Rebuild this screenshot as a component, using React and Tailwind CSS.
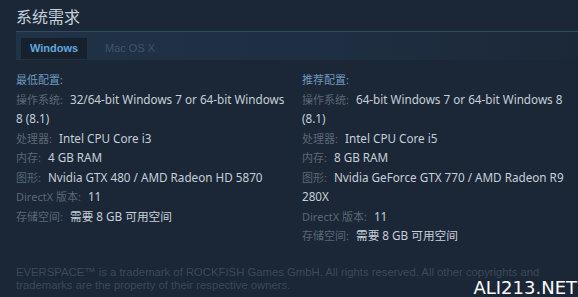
import React from "react";

// values with a forced break follow the wrap in the screenshot
const minSpecs = [
    ["操作系统:", ["32/64-bit Windows 7 or 64-bit Windows", "8 (8.1)"]],
    ["处理器:", ["Intel CPU Core i3"]],
    ["内存:", ["4 GB RAM"]],
    ["图形:", ["Nvidia GTX 480 / AMD Radeon HD 5870"]],
    ["DirectX 版本:", ["11"]],
    ["存储空间:", ["需要 8 GB 可用空间"]],
];

const recSpecs = [
    ["操作系统:", ["64-bit Windows 7 or 64-bit Windows 8", "(8.1)"]],
    ["处理器:", ["Intel CPU Core i5"]],
    ["内存:", ["8 GB RAM"]],
    ["图形:", ["Nvidia GeForce GTX 770 / AMD Radeon R9", "280X"]],
    ["DirectX 版本:", ["11"]],
    ["存储空间:", ["需要 8 GB 可用空间"]],
];

function SpecColumn({ title, specs }) {
    return (
        <div className="w-[276px] text-[11.7px] leading-[19.5px]">
            <div className="text-[#6d98bd] text-[11px]">{title}</div>
            <ul>
                {specs.map(([label, lines], index) => (
                    <li key={index}>
                        <div className="flex whitespace-nowrap">
                            <span className="text-[#5a6875] text-[11px] mr-[7px]">{label}</span>
                            <span className="text-[#c6d0d9]">{lines[0]}</span>
                        </div>
                        {lines[1] && <div className="text-[#c6d0d9]">{lines[1]}</div>}
                    </li>
                ))}
            </ul>
        </div>
    );
}

export default function App() {
    return (
        <div
            className="relative w-[578px] h-[297px] overflow-hidden bg-[#1b2636]"
            style={{ fontFamily: '"Noto Sans", "Noto Sans CJK SC", sans-serif' }}
        >
            <div className="pl-[16px] pt-[6px]">
                <h2 className="text-[16px] leading-[22px] text-[#c5d3df]">系统需求</h2>
                <div className="mt-[3px] h-[29px] bg-gradient-to-r from-[#203246] via-[#1f2f43] to-[#1b2838] border-t border-[#2f4a62] flex items-end pl-[5px] pb-[1px]">
                    <div className="h-[21px] w-[66px] bg-[#17212e] text-[#5fa8de] text-[11px] font-bold flex items-center justify-center" style={{ fontFamily: '"Liberation Sans", sans-serif' }}>
                        Windows
                    </div>
                    <div className="h-[21px] ml-[18px] text-[#3f566c] text-[11px] flex items-center" style={{ fontFamily: '"Liberation Sans", sans-serif' }}>
                        Mac OS X
                    </div>
                </div>
            </div>
            <div className="flex gap-[10px] pl-[16px] mt-[10px]">
                <SpecColumn title="最低配置:" specs={minSpecs} />
                <SpecColumn title="推荐配置:" specs={recSpecs} />
            </div>
            <div
                className="absolute left-[16px] top-[266px] text-[11.3px] leading-[13px] text-[#3a4a5b]"
                style={{ fontFamily: '"Liberation Sans", sans-serif' }}
            >
                <p>EVERSPACE™ is a trademark of ROCKFISH Games GmbH. All rights reserved. All other copyrights and</p>
                <p>trademarks are the property of their respective owners.</p>
            </div>
            <div
                className="absolute right-[1px] bottom-[0px] text-[18px] leading-[18px] text-white"
                style={{ fontFamily: '"DejaVu Sans", sans-serif' }}
            >
                ALI213.NET
            </div>
        </div>
    );
}
